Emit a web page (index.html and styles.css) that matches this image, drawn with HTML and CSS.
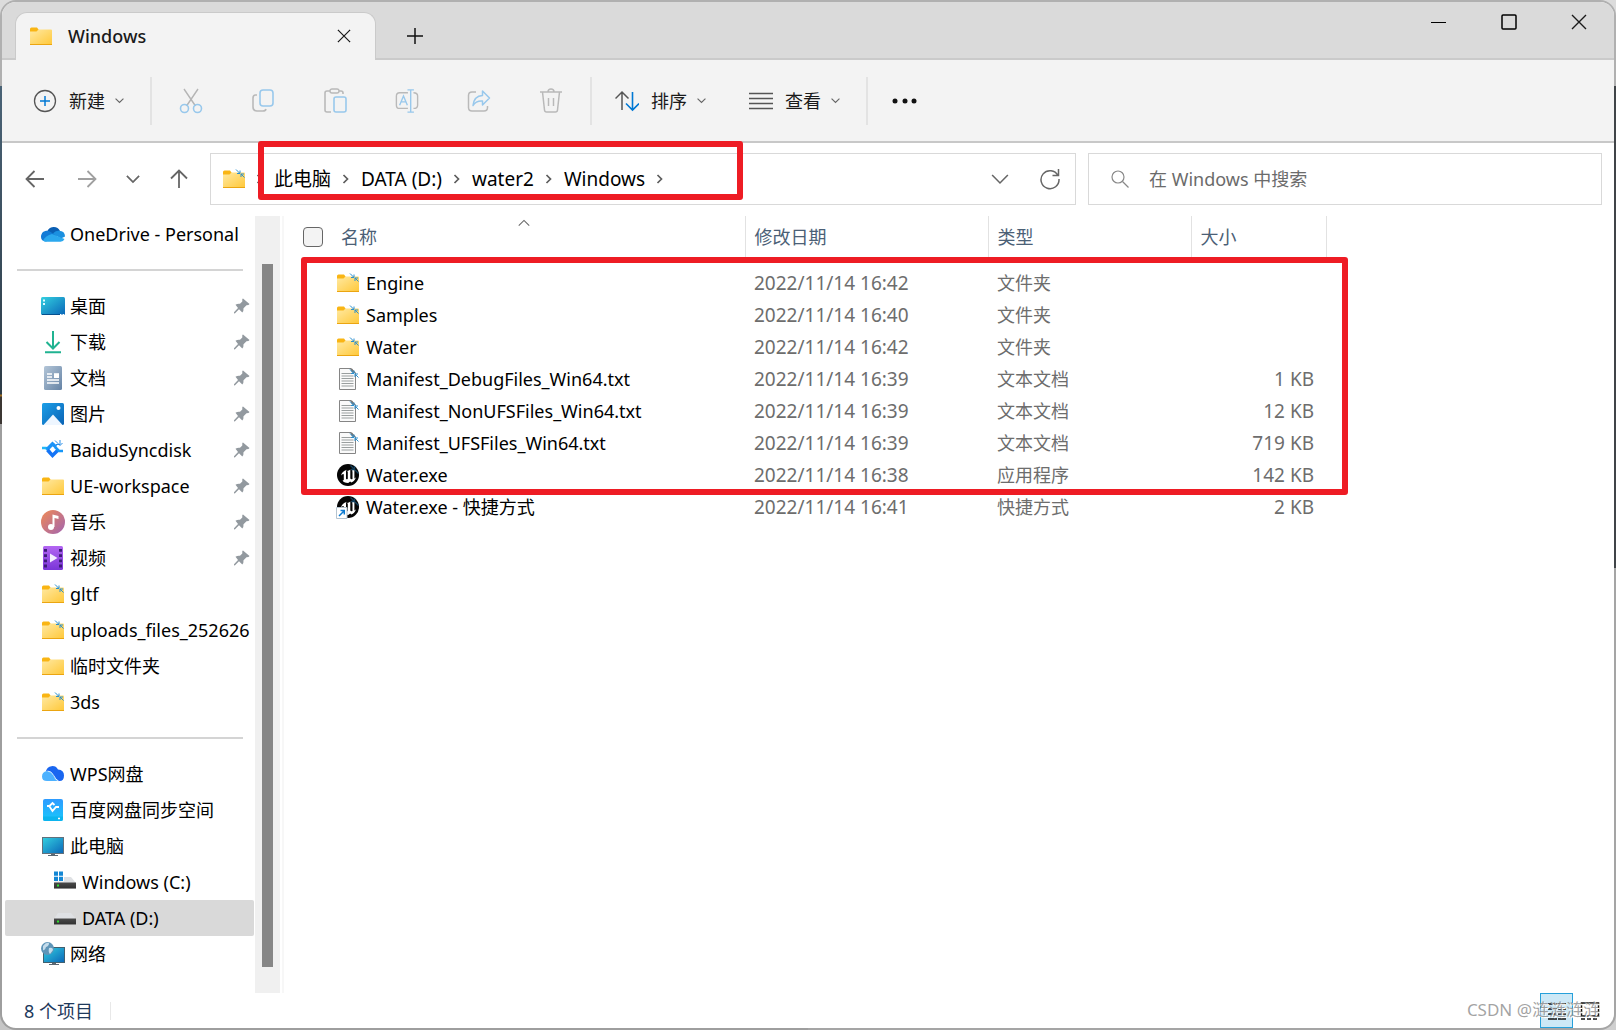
FILE: index.html
```html
<!DOCTYPE html>
<html lang="zh-CN">
<head>
<meta charset="utf-8">
<title>Windows</title>
<link rel="stylesheet" href="styles.css">
</head>
<body>
<svg class="defs" aria-hidden="true">
  <defs>
    <linearGradient id="g-folder" x1="0" y1="0" x2="1" y2="1"><stop offset="0" stop-color="#ffe9a2"/><stop offset="1" stop-color="#ffc93c"/></linearGradient>
    <linearGradient id="g-screen" x1="0" y1="0" x2="1" y2="1"><stop offset="0" stop-color="#33d0e0"/><stop offset="1" stop-color="#0a66b8"/></linearGradient>
    <linearGradient id="g-doc" x1="0" y1="0" x2="1" y2="1"><stop offset="0" stop-color="#b4c6d8"/><stop offset="1" stop-color="#6583a5"/></linearGradient>
    <linearGradient id="g-pic" x1="0" y1="0" x2="1" y2="1"><stop offset="0" stop-color="#1c9fe8"/><stop offset="1" stop-color="#0a62b4"/></linearGradient>
    <linearGradient id="g-music" x1="0" y1="0" x2="1" y2="1"><stop offset="0" stop-color="#f08a55"/><stop offset="1" stop-color="#a264b0"/></linearGradient>
    <linearGradient id="g-video" x1="0" y1="0" x2="0" y2="1"><stop offset="0" stop-color="#b366f2"/><stop offset="1" stop-color="#7a35d8"/></linearGradient>
    <linearGradient id="g-baidu" x1="0" y1="0" x2="0" y2="1"><stop offset="0" stop-color="#2e9bff"/><stop offset="1" stop-color="#18c8fb"/></linearGradient>
    <linearGradient id="g-drive" x1="0" y1="0" x2="0" y2="1"><stop offset="0" stop-color="#4a4a4a"/><stop offset="1" stop-color="#2f2f2f"/></linearGradient>
  </defs>
  <symbol id="i-folder" viewBox="0 0 24 24">
    <path d="M1 5q0-1.500 1.500-1.500H8l1.500 2v4H1z" fill="#f9b514"/>
    <path d="M1 7.500h6.500l2-2H22q1 0 1 1V20H1z" fill="url(#g-folder)"/>
    <path d="M1 20h22v1H1z" fill="#eba511"/>
  </symbol>
  <symbol id="i-sync" viewBox="0 0 24 24">
    <path d="M14 2.500l3.500 3.500M18 3.500v3h-3M22.500 10.500L19 7M19 10V7h3" fill="none" stroke="#2a8fd0" stroke-width="1"/>
  </symbol>
  <symbol id="i-folder-sync" viewBox="0 0 24 24"><use href="#i-folder"/><use href="#i-sync"/></symbol>
  <symbol id="i-txt" viewBox="0 0 24 24">
    <path d="M3.500 1.500h11.500l4.500 4.500v16.500h-16z" fill="#fafafa" stroke="#858585"/>
    <path d="M5.500 6.500h10M5.500 9h12M5.500 11.500h12M5.500 14h12M5.500 16.500h12M5.500 19h12" stroke="#9a9f9f"/>
    <path d="M14 1.500h2l4 5-4-1z" fill="#777"/><use href="#i-sync"/>
  </symbol>
  <symbol id="i-ue" viewBox="0 0 24 24">
    <circle cx="12" cy="12" r="11" fill="#050505"/>
    <path d="M5 12.500Q6 8.500 10.800 6.800q-1 1-.8 2v7q.8 1 1.800 0V9.200q0-.7-.7-1.200 2-.5 3.200-1.500v9q.9 1.200 2.200.4V9q0-1-.6-1.500 2-.6 3-2-.5 1.200-.5 2.500v7.500q.8-.2 1.600-1.200-1.600 4.200-4.700 5.200l-1.100-1-2 1.500Q7.500 20 6.500 17.300q.8.300 1.300-.6v-5q0-1.500-2.800.8z" fill="#fff"/>
    <path d="M14.500 2.500l3.500 3.500M18.500 3v3.500H15M22.500 10.500L19 7" fill="none" stroke="#123f5c" stroke-width="1.300"/>
  </symbol>
  <symbol id="i-ue-link" viewBox="0 0 24 24">
    <use href="#i-ue"/>
    <path d="M.5 12.500h10.500v11H.5z" fill="#fff" stroke="#b5c4d0"/>
    <path d="M3 21l5-5M4.500 15.500H8.300v4" fill="none" stroke="#0b7ad1" stroke-width="1.500"/>
  </symbol>
  <symbol id="i-onedrive" viewBox="0 0 24 24">
    <path d="M6 10a7 7 0 0 1 13-1l-2 5-9-2z" fill="#0a5fb4"/>
    <path d="M0 15a6 6 0 0 1 8-6l8 5-11 5.500Q0 19 0 15z" fill="#127bd6"/>
    <path d="M12 12q2-3.500 6-3.300Q24 9 24 14.500l-4 2z" fill="#1b90e0"/>
    <path d="M2 18.500q2.500-5 9-6.500l12.500 5q-1 2.700-4 2.700H5q-2 0-3-1.200z" fill="#2ba8ee"/>
  </symbol>
  <symbol id="i-desktop" viewBox="0 0 24 24">
    <rect y="3" width="24" height="18" rx="1.500" fill="url(#g-screen)"/>
    <path d="M2 5.500h2v2H2zM2 9h2v2H2z" fill="#dffaff"/><path d="M1 20h18v1H1z" fill="#07508e"/><path d="M19 20h1.500v1H19zM21.500 20H23v1h-1.500z" fill="#fff"/>
  </symbol>
  <symbol id="i-down" viewBox="0 0 24 24"><path d="M12 1v17M5.500 12l6.500 6.500 6.500-6.500M4 22.200h16" fill="none" stroke="#20b391" stroke-width="2"/></symbol>
  <symbol id="i-doc" viewBox="0 0 24 24">
    <rect x="3" width="18" height="24" rx="1.500" fill="url(#g-doc)"/>
    <path d="M6 8h5M6 11h5M6 14h12M6 17h12" stroke="#fff" stroke-width="1.300"/><path d="M13 7.200h5V12h-5z" fill="#fff"/>
  </symbol>
  <symbol id="i-pic" viewBox="0 0 24 24">
    <rect x="1" y="1" width="22" height="22" rx="1.500" fill="url(#g-pic)"/><path d="M2.500 23L12 12.500 21.500 23z" fill="#eef6ff"/><circle cx="17.500" cy="6" r="2" fill="#fff"/>
  </symbol>
  <symbol id="i-baidu" viewBox="0 0 24 24">
    <path d="M1 10h4l4 4" fill="none" stroke="#22b7f7" stroke-width="2.500"/>
    <path d="M6 11.500L11.500 6l3.500 3" fill="none" stroke="#1a93f8" stroke-width="3.500"/>
    <path d="M6.500 12l5 5.500 5.500-5.500" fill="none" stroke="#1474f6" stroke-width="3.500"/>
    <path d="M14 9l4 4h4" fill="none" stroke="#1696f8" stroke-width="2.500"/>
    <path d="M14 2.500l4 4M19 2v4.500h-4M21.500 5l-3 3" fill="none" stroke="#2b8fe8"/>
  </symbol>
  <symbol id="i-music" viewBox="0 0 24 24">
    <circle cx="12" cy="12" r="12" fill="url(#g-music)"/><circle cx="10" cy="17" r="3" fill="#fff"/><path d="M11.500 17V4.500l6 1.500v3l-4-1v9z" fill="#fff"/>
  </symbol>
  <symbol id="i-video" viewBox="0 0 24 24">
    <rect x="2" y="0" width="20" height="24" rx="1.500" fill="url(#g-video)"/>
    <path d="M4.500 3v19M19.500 3v19" stroke="#3d1c78" stroke-width="3" stroke-dasharray="2.800 2.400"/><path d="M9 7.500l7.500 4.500L9 16.500z" fill="#f4edff"/>
  </symbol>
  <symbol id="i-wps" viewBox="0 0 24 24">
    <path d="M5 9A6.500 6.500 0 0 1 17 7.500q6 .5 6 6t-4.500 5.500Q15 19 13 15z" fill="#1a66f0"/>
    <path d="M1 14.500q0-5 5.500-5.500 4 0 6 4.500 1.500 4.500 4.500 5.500H6q-5 0-5-4.500z" fill="#4db2ff"/>
    <path d="M6.500 9q4 0 6.200 4.500t4.800 5.500" fill="none" stroke="#d7efff"/>
  </symbol>
  <symbol id="i-bdisk" viewBox="0 0 24 24">
    <rect x="2" y="1" width="20" height="22" rx="2" fill="url(#g-baidu)"/><path d="M2 18.500h20V21q0 2-2 2H4q-2 0-2-2z" fill="#0cb4ee"/>
    <path d="M6 8h2.500l3-3 2 2M8.500 8.500l3 4.500 3.500-4h3" fill="none" stroke="#fff" stroke-width="1.800"/><path d="M17 20.500h2" stroke="#fff" stroke-width="1.500"/>
  </symbol>
  <symbol id="i-pc" viewBox="0 0 24 24">
    <path d="M10 19h4v2h3v1H7v-1h3z" fill="#5a6772"/><rect x="1.500" y="3.500" width="21" height="16" fill="url(#g-screen)" stroke="#61707c"/>
  </symbol>
  <symbol id="i-drive" viewBox="0 0 24 24">
    <path d="M5 7h13l5 6H1z" fill="#dfe1e4"/><path d="M1 12.500h22V19H1z" fill="url(#g-drive)"/><path d="M1 18h22v1H1z" fill="#8a8a8a"/><path d="M4 14.500h2v2H4z" fill="#2ee02e"/>
  </symbol>
  <symbol id="i-windrive" viewBox="0 0 24 24">
    <use href="#i-drive"/><path d="M0 0h11v11.500H0z" fill="#fff"/><path d="M1 1.500h4v4.200H1zM6 1.500h4v4.200H6zM1 6.700h4v4.200H1zM6 6.700h4v4.200H6z" fill="#1487d4"/>
  </symbol>
  <symbol id="i-net" viewBox="0 0 24 24">
    <path d="M11 20h4v2h3v1H8v-1h3z" fill="#5a6772"/><rect x="2.500" y="5.500" width="21" height="15" fill="url(#g-screen)" stroke="#41606f"/>
    <circle cx="6.500" cy="6.500" r="6.500" fill="#5e95b8"/><path d="M2 4q3-4 6-3 0 3-3 4-1 4-3 3zM8 6q4-1 4 2l-3 4q-2-2-1-6z" fill="#c5dceb"/>
  </symbol>
  <symbol id="i-pin" viewBox="0 0 16 16"><path d="M9 .5L15.500 6l-1 1-2 .3-3 3q.3 2.500-1.200 4.200L5 11.200.8 15.500 0 15.200v-1L4 10 1.500 6.800Q3.500 5.400 6 5.800l2.300-2.300L8.300 1z" fill="#92999f"/></symbol>
  <symbol id="i-x" viewBox="0 0 16 16"><path d="M1 1l14 14M15 1L1 15" fill="none" stroke="currentColor" stroke-width="1.400"/></symbol>
  <symbol id="i-chev" viewBox="0 0 16 16"><path d="M1 4.500l7 7 7-7" fill="none" stroke="currentColor" stroke-width="var(--sw,1.400)"/></symbol>
  <symbol id="i-crumb" viewBox="0 0 8 10"><path d="M1.500 1l4 4-4 4" fill="none" stroke="#5c5c5c" stroke-width="1.700"/></symbol>
  <symbol id="i-arrow" viewBox="0 0 20 20"><path d="M19 10H1.500M9.500 2l-8 8 8 8" fill="none" stroke="currentColor" stroke-width="1.800"/></symbol>
</svg>

<main class="window">
  <header class="titlebar">
    <div class="tab">
      <svg class="ico"><use href="#i-folder"/></svg>
      <span class="tab-name">Windows</span>
      <button class="plain tab-close" aria-label="关闭标签页"><svg class="x14"><use href="#i-x"/></svg></button>
    </div>
    <button class="plain tab-new" aria-label="新标签页"><svg width="16" height="16"><path d="M8 0v16M0 8h16" stroke="#111" stroke-width="1.500"/></svg></button>
    <div class="caption">
      <button class="plain" aria-label="最小化"><svg width="16" height="16"><path d="M0 8.500h15" stroke="#000"/></svg></button>
      <button class="plain" aria-label="最大化"><svg width="16" height="16"><rect x="1" y="1" width="14" height="14" rx="1" fill="none" stroke="#000" stroke-width="1.500"/></svg></button>
      <button class="plain" aria-label="关闭"><svg width="16" height="16"><use href="#i-x"/></svg></button>
    </div>
  </header>

  <div class="toolbar">
    <div class="tool-group first">
      <button class="plain labelled">
        <svg width="24" height="24"><circle cx="12" cy="12" r="10.500" fill="none" stroke="#555" stroke-width="1.300"/><path d="M12 7v10M7 12h10" stroke="#0078d4" stroke-width="1.500"/></svg>
        <span>新建</span><svg class="chev"><use href="#i-chev"/></svg>
      </button>
    </div>
    <div class="tool-group icons">
      <button class="plain" aria-label="剪切" disabled><svg width="24" height="26"><path d="M5 1l11.500 17M19 1L7.500 18" stroke="#b5b5b5" stroke-width="1.400"/><g fill="none" stroke="#98c8ec" stroke-width="1.600"><circle cx="5.500" cy="20.500" r="4"/><circle cx="18.500" cy="20.500" r="4"/></g></svg></button>
      <button class="plain" aria-label="复制" disabled><svg width="24" height="26"><path d="M6 7H4.500Q2 7 2 10v9q0 4 4 4h6q2.500 0 3-2" fill="none" stroke="#b9b9b9" stroke-width="1.600"/><rect x="9" y="2" width="13" height="16" rx="3" fill="none" stroke="#98c8ec" stroke-width="1.600"/></svg></button>
      <button class="plain" aria-label="粘贴" disabled><svg width="24" height="26"><path d="M7 3H4Q2 3 2 5v17q0 2 2 2h4M16 3h2q2 0 2 2v1" fill="none" stroke="#b9b9b9" stroke-width="1.600"/><rect x="7" y="1" width="9" height="4" rx="2" fill="none" stroke="#b9b9b9" stroke-width="1.400"/><rect x="11" y="9" width="12" height="15" rx="2" fill="none" stroke="#98c8ec" stroke-width="1.600"/></svg></button>
      <button class="plain" aria-label="重命名" disabled><svg width="24" height="26" viewBox="0 0 26 26"><path d="M14 4H5Q1.500 4 1.500 7.500v10Q1.500 21 5 21h9M20 4q4.500 0 4.500 3.500v10Q24.500 21 20 21" fill="none" stroke="#b9b9b9" stroke-width="1.500"/><path d="M17 1v24M13.500 1h7M13.500 25h7M5 17.500l4.200-10 4.200 10M6.500 14h5.500" fill="none" stroke="#98c8ec" stroke-width="1.500"/></svg></button>
      <button class="plain" aria-label="共享" disabled><svg width="24" height="26"><path d="M9 4H5Q1.500 4 1.500 7.500v12Q1.500 23 5 23h12q3.500 0 3.500-3.500V18" fill="none" stroke="#b9b9b9" stroke-width="1.500"/><path d="M15.500 3l7 7-7 7v-4Q9 12.500 6 17.500 7 8 15.500 7.500z" fill="none" stroke="#98c8ec" stroke-width="1.500" stroke-linejoin="round"/></svg></button>
      <button class="plain" aria-label="删除" disabled><svg width="24" height="26"><path d="M1 4h22M3.500 4l2 18q.2 2 2 2h9q1.800 0 2-2l2-18M9 4q0-3 3-3t3 3M9.500 10v8M14.500 10v8" fill="none" stroke="#b9b9b9" stroke-width="1.500"/></svg></button>
    </div>
    <div class="tool-group sorts">
      <button class="plain labelled">
        <svg width="24" height="24"><path d="M7 21V3M.500 9.500L7 3l6.500 6.500" fill="none" stroke="#555" stroke-width="1.500"/><path d="M17.500 3v18M11 14.500l6.500 6.500 6.500-6.500" fill="none" stroke="#0078d4" stroke-width="1.600"/></svg>
        <span>排序</span><svg class="chev"><use href="#i-chev"/></svg>
      </button>
      <button class="plain labelled">
        <svg width="24" height="24"><path d="M0 4.500h24M0 9.500h24M0 14.500h24M0 19.500h24" stroke="#555" stroke-width="1.300"/></svg>
        <span>查看</span><svg class="chev"><use href="#i-chev"/></svg>
      </button>
    </div>
    <button class="plain more" aria-label="更多"><svg width="26" height="8"><g fill="#111"><circle cx="3" cy="4" r="2.500"/><circle cx="13" cy="4" r="2.500"/><circle cx="22" cy="4" r="2.500"/></g></svg></button>
  </div>

  <nav class="navbar" aria-label="导航">
    <div class="nav-buttons">
      <button class="plain" aria-label="后退"><svg class="arr"><use href="#i-arrow"/></svg></button>
      <button class="plain dim" aria-label="前进"><svg class="arr fwd"><use href="#i-arrow"/></svg></button>
      <button class="plain" aria-label="最近位置"><svg class="recent"><use href="#i-chev"/></svg></button>
      <button class="plain" aria-label="向上"><svg class="arr up"><use href="#i-arrow"/></svg></button>
    </div>
    <div class="address">
      <svg class="ico"><use href="#i-folder-sync"/></svg>
      <svg class="crumb"><use href="#i-crumb"/></svg>
      <a href="#pc">此电脑</a><svg class="crumb"><use href="#i-crumb"/></svg>
      <a href="#d">DATA (D:)</a><svg class="crumb"><use href="#i-crumb"/></svg>
      <a href="#water2">water2</a><svg class="crumb"><use href="#i-crumb"/></svg>
      <a href="#windows">Windows</a><svg class="crumb"><use href="#i-crumb"/></svg>
      <div class="address-end">
        <button class="plain" aria-label="以前的位置"><svg class="drop"><use href="#i-chev"/></svg></button>
        <button class="plain" aria-label="刷新"><svg width="20" height="22"><path d="M18 7.500A9 9 0 1 0 19 11M18.500 1v6.500H12.500" fill="none" stroke="#666" stroke-width="1.500"/></svg></button>
      </div>
      <div class="mark mark-path"></div>
    </div>
    <label class="search">
      <svg width="18" height="18"><circle cx="7" cy="7" r="6" fill="none" stroke="#888" stroke-width="1.200"/><path d="M11.500 11.500l6 6" stroke="#888" stroke-width="1.300"/></svg>
      <input type="search" placeholder="在 Windows 中搜索" aria-label="搜索">
    </label>
  </nav>

  <div class="body">
    <aside class="side">
      <ul class="tree">
        <li><a href="#od"><svg class="ico"><use href="#i-onedrive"/></svg><span>OneDrive - Personal</span></a></li>
        <li class="rule"></li>
        <li><a href="#1"><svg class="ico"><use href="#i-desktop"/></svg><span>桌面</span><svg class="pin"><use href="#i-pin"/></svg></a></li>
        <li><a href="#2"><svg class="ico"><use href="#i-down"/></svg><span>下载</span><svg class="pin"><use href="#i-pin"/></svg></a></li>
        <li><a href="#3"><svg class="ico"><use href="#i-doc"/></svg><span>文档</span><svg class="pin"><use href="#i-pin"/></svg></a></li>
        <li><a href="#4"><svg class="ico"><use href="#i-pic"/></svg><span>图片</span><svg class="pin"><use href="#i-pin"/></svg></a></li>
        <li><a href="#5"><svg class="ico"><use href="#i-baidu"/></svg><span>BaiduSyncdisk</span><svg class="pin"><use href="#i-pin"/></svg></a></li>
        <li><a href="#6"><svg class="ico"><use href="#i-folder"/></svg><span>UE-workspace</span><svg class="pin"><use href="#i-pin"/></svg></a></li>
        <li><a href="#7"><svg class="ico"><use href="#i-music"/></svg><span>音乐</span><svg class="pin"><use href="#i-pin"/></svg></a></li>
        <li><a href="#8"><svg class="ico"><use href="#i-video"/></svg><span>视频</span><svg class="pin"><use href="#i-pin"/></svg></a></li>
        <li><a href="#9"><svg class="ico"><use href="#i-folder-sync"/></svg><span>gltf</span></a></li>
        <li><a href="#10"><svg class="ico"><use href="#i-folder-sync"/></svg><span>uploads_files_252626</span></a></li>
        <li><a href="#11"><svg class="ico"><use href="#i-folder"/></svg><span>临时文件夹</span></a></li>
        <li><a href="#12"><svg class="ico"><use href="#i-folder-sync"/></svg><span>3ds</span></a></li>
        <li class="rule"></li>
        <li><a href="#13"><svg class="ico"><use href="#i-wps"/></svg><span>WPS网盘</span></a></li>
        <li><a href="#14"><svg class="ico"><use href="#i-bdisk"/></svg><span>百度网盘同步空间</span></a></li>
        <li><a href="#15"><svg class="ico"><use href="#i-pc"/></svg><span>此电脑</span></a></li>
        <li class="sub"><a href="#16"><svg class="ico"><use href="#i-windrive"/></svg><span>Windows (C:)</span></a></li>
        <li class="sub current"><a href="#17"><svg class="ico"><use href="#i-drive"/></svg><span>DATA (D:)</span></a></li>
        <li><a href="#18"><svg class="ico"><use href="#i-net"/></svg><span>网络</span></a></li>
      </ul>
      <div class="track"><div class="thumb"></div></div>
    </aside>

    <section class="files">
      <table>
        <colgroup><col class="c-name"><col class="c-date"><col class="c-type"><col class="c-size"></colgroup>
        <thead>
          <tr>
            <th><div class="name-head"><input type="checkbox" aria-label="全选"><span>名称</span><svg class="sorted"><use href="#i-chev"/></svg></div></th>
            <th>修改日期</th><th>类型</th><th>大小</th>
          </tr>
        </thead>
        <tbody>
          <tr><td><div class="file"><svg class="ico"><use href="#i-folder-sync"/></svg>Engine</div></td><td class="num">2022/11/14 16:42</td><td>文件夹</td><td class="size"></td></tr>
          <tr><td><div class="file"><svg class="ico"><use href="#i-folder-sync"/></svg>Samples</div></td><td class="num">2022/11/14 16:40</td><td>文件夹</td><td class="size"></td></tr>
          <tr><td><div class="file"><svg class="ico"><use href="#i-folder-sync"/></svg>Water</div></td><td class="num">2022/11/14 16:42</td><td>文件夹</td><td class="size"></td></tr>
          <tr><td><div class="file"><svg class="ico"><use href="#i-txt"/></svg>Manifest_DebugFiles_Win64.txt</div></td><td class="num">2022/11/14 16:39</td><td>文本文档</td><td class="size">1 KB</td></tr>
          <tr><td><div class="file"><svg class="ico"><use href="#i-txt"/></svg>Manifest_NonUFSFiles_Win64.txt</div></td><td class="num">2022/11/14 16:39</td><td>文本文档</td><td class="size">12 KB</td></tr>
          <tr><td><div class="file"><svg class="ico"><use href="#i-txt"/></svg>Manifest_UFSFiles_Win64.txt</div></td><td class="num">2022/11/14 16:39</td><td>文本文档</td><td class="size">719 KB</td></tr>
          <tr><td><div class="file"><svg class="ico"><use href="#i-ue"/></svg>Water.exe</div></td><td class="num">2022/11/14 16:38</td><td>应用程序</td><td class="size">142 KB</td></tr>
          <tr><td><div class="file"><svg class="ico"><use href="#i-ue-link"/></svg>Water.exe - 快捷方式</div></td><td class="num">2022/11/14 16:41</td><td>快捷方式</td><td class="size">2 KB</td></tr>
        </tbody>
      </table>
      <div class="mark mark-files"></div>
    </section>
  </div>

  <footer class="status">
    <span class="count">8 个项目</span>
    <div class="views">
      <button class="plain on" aria-label="详细信息"><svg width="20" height="18"><path d="M1 2h9M11 2h8M1 7h9M11 7h8M1 12h9M11 12h8M1 17h9M11 17h8" stroke="#111" stroke-width="1.500"/></svg></button>
      <button class="plain" aria-label="大图标"><svg width="20" height="18"><rect x="1.500" y="1" width="17" height="13" fill="none" stroke="#111" stroke-width="1.500"/><path d="M1 17h18" stroke="#111" stroke-width="1.500" stroke-dasharray="4 2"/></svg></button>
    </div>
    <span class="watermark">CSDN @涟涟涟涟</span>
  </footer>
</main>
</body>
</html>
```
FILE: styles.css
```css
* { box-sizing: border-box; }

body {
  margin: 0;
  min-height: 100vh;
  display: flex;
  background:
    linear-gradient(#dcdcdc 0 86px, #5d7c94 86px, #384a58 394px, #c98a2c 395px 396px, #4a4440 397px 424px, #c6c6c6 424px) left / 50% 100% no-repeat,
    linear-gradient(#dcdcdc 0 86px, #50565a 86px 568px, #cfcfcf 568px) right / 50% 100% no-repeat;
  font-family: "Noto Sans", "Noto Sans CJK SC", sans-serif;
  font-size: 18px;
  line-height: 24px;
  color: #000;
}

.defs { position: absolute; width: 0; height: 0; }
a { color: inherit; text-decoration: none; }
svg { display: block; flex: none; }
.ico { width: 24px; height: 24px; }

.plain {
  border: 0;
  padding: 0;
  background: none;
  font: inherit;
  color: #1a1a1a;
  display: flex;
  align-items: center;
  justify-content: center;
}

.window {
  flex: 1;
  min-width: 0;
  display: flex;
  flex-direction: column;
  border: 2px solid #0003;
  border-radius: 16px;
  background: #fff;
  background-clip: padding-box;
  overflow: hidden;
}

/* title bar */
.titlebar {
  height: 58px;
  display: flex;
  background: #dadada;
  border-bottom: 2px solid #cacaca;
  padding-left: 13px;
}
.tab {
  width: 361px;
  height: 48px;
  margin-top: 10px;
  padding: 0 24px 2px 13px;
  display: flex;
  align-items: center;
  background: #f3f3f3;
  border: 1px solid #cacaca;
  border-width: 1px 1px 0;
  border-radius: 12px 12px 0 0;
}
.tab-name { margin-left: 15px; font-weight: 500; color: #1a1a1a; }
.tab-close { margin-left: auto; }
.x14 { width: 14px; height: 14px; }
.tab-new { margin: 11px 0 0 30px; width: 18px; height: 46px; }
.caption { margin-left: auto; display: flex; height: 40px; }
.caption .plain { width: 70px; }

/* command bar */
.toolbar {
  height: 83px;
  display: flex;
  align-items: center;
  background: #f3f3f3;
  border-bottom: 2px solid #c8c8c8;
}
.tool-group {
  height: 48px;
  display: flex;
  align-items: center;
  border-right: 2px solid #e3e3e3;
}
.first { padding: 0 26px 0 31px; }
.icons { padding: 0 27px; gap: 48px; }
.sorts { padding: 0 26px 0 23px; gap: 43px; }
.labelled span { margin: 0 10px 0 12px; }
.chev { width: 9px; height: 9px; color: #666; --sw: 2; }
.more { margin-left: 24px; }

/* navigation bar */
.navbar {
  height: 72px;
  padding: 10px 12px 10px 22px;
  display: grid;
  grid-template-columns: 174px 866fr 514fr;
  gap: 12px;
}
.nav-buttons { display: flex; align-items: center; gap: 29px; padding-left: 1px; }
.nav-buttons .plain { color: #666; }
.nav-buttons .dim { color: #a0a0a0; margin-left: 3px; }
.arr { width: 20px; height: 20px; }
.fwd { transform: rotate(180deg); }
.up { transform: rotate(90deg); }
.nav-buttons .recent { width: 14px; height: 14px; --sw: 2; }
.address {
  position: relative;
  display: flex;
  align-items: center;
  border: 1px solid #d9d9d9;
  padding: 0 15px 0 11px;
  font-size: 19px;
}
.crumb { width: 8px; height: 10px; margin: 0 11px; }
.address .ico + .crumb { margin: 0 10px; }
.address-end { margin-left: auto; display: flex; gap: 31px; }
.drop { width: 18px; height: 18px; color: #666; }
.search {
  display: flex;
  align-items: center;
  gap: 20px;
  padding: 0 22px;
  border: 1px solid #d9d9d9;
}
.search input {
  flex: 1;
  min-width: 0;
  border: 0;
  padding: 0;
  outline: 0;
  font: inherit;
  background: none;
}
.search input::placeholder { color: #6b6b6b; opacity: 1; }

/* hand-drawn highlight frames over the content */
.mark {
  position: absolute;
  border: 6px solid #ee1c24;
  border-radius: 3px;
  pointer-events: none;
}
.mark-path { left: 47px; top: -13px; width: 485px; height: 59px; }
.mark-files { left: 17px; top: 41px; width: 1047px; height: 238px; }

/* sidebar */
.body { flex: 1; display: flex; padding-top: 1px; }
.side { width: 282px; display: flex; border-right: 2px solid #f7f7f7; }
.tree {
  width: 253px;
  margin: 0;
  padding: 0;
  list-style: none;
  overflow: hidden;
}
.tree li { height: 36px; padding-left: 3px; }
.tree a {
  height: 36px;
  padding: 0 4px 0 36px;
  margin-right: 1px;
  display: flex;
  align-items: center;
  gap: 5px;
  white-space: nowrap;
}
.tree .sub a { padding-left: 48px; }
.tree .current a { background: #d9d9d9; border-radius: 2px; }
.tree .rule { padding: 17px 12px 0 15px; }
.rule::before { content: ""; display: block; height: 2px; background: #d4d4d4; }
.pin { width: 16px; height: 16px; margin-left: auto; }
.track { width: 25px; margin-right: 2px; background: #f0f0f0; padding: 48px 7px 26px; display: flex; }
.thumb { flex: 1; background: #868686; }

/* file list */
.files { position: relative; flex: 1; min-width: 0; }
table { width: 1042px; border-collapse: collapse; table-layout: fixed; }
.c-name { width: 461px; }
.c-date { width: 243px; }
.c-type { width: 203px; }
.c-size { width: 135px; }
th, td { padding: 0 0 0 9px; text-align: left; font-weight: 400; white-space: nowrap; }
th { height: 41px; border-right: 1px solid #e2e2e2; color: #4b6076; }
th:first-child, td:first-child { padding-left: 19px; }
tbody::before { content: ""; display: block; height: 10px; }
td { height: 32px; color: #6d6d6d; }
.name-head { display: flex; align-items: center; height: 40px; }
.name-head input {
  appearance: none;
  width: 20px;
  height: 20px;
  margin: 0 18px 0 0;
  border: 1px solid #666;
  border-radius: 4px;
  background: #f3f3f3;
}
.sorted { width: 12px; height: 12px; margin: 0 0 0 141px; align-self: flex-start; color: #666; transform: rotate(180deg); }
.file { display: flex; align-items: center; gap: 6px; padding-left: 33px; color: #000; }
.num, .size { font-size: 19px; }
.size { text-align: right; padding-right: 12px; }

/* status bar */
.status {
  position: relative;
  height: 35px;
  display: flex;
  align-items: center;
  justify-content: space-between;
  padding: 0 8px 0 22px;
}
.count { color: #1e395b; padding-right: 17px; border-right: 1px solid #e8e8e8; line-height: 18px; }
.views { display: flex; align-self: stretch; }
.views .plain { width: 33px; border: 1px solid transparent; }
.views .on { background: #cce8f6; border-color: #26a0da; }
.watermark {
  position: absolute;
  right: 14px;
  top: 5px;
  font-size: 17px;
  color: #858585c0;
  text-shadow: 1px 1px #fff;
}
```
